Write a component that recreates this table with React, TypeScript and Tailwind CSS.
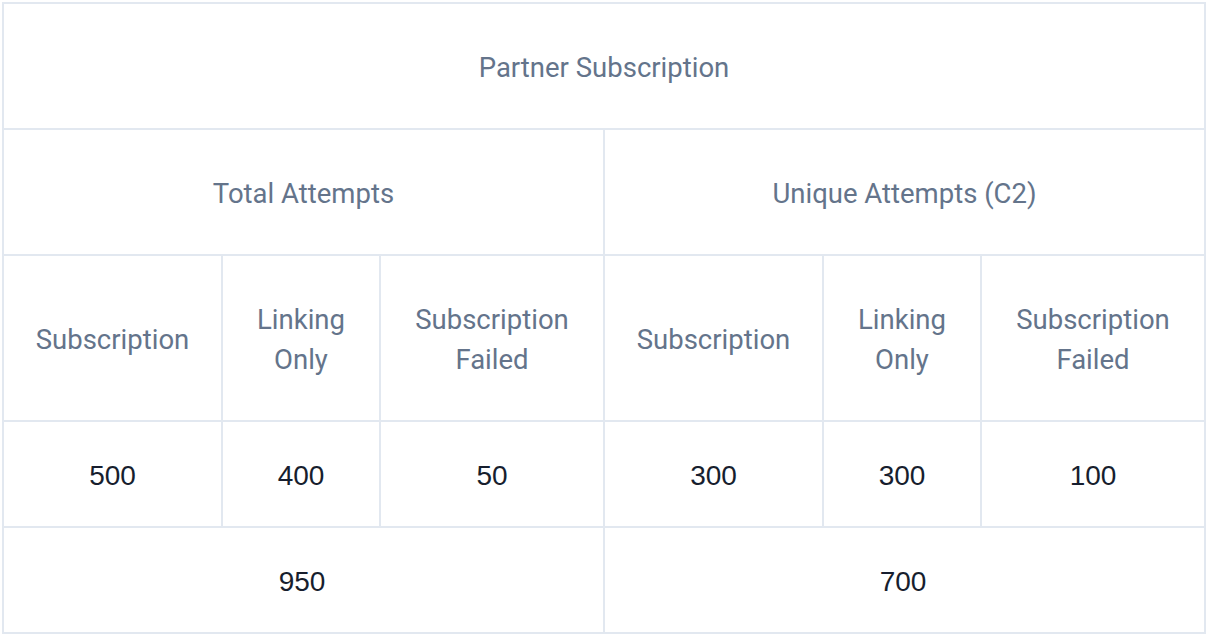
import React from "react";

const sub = ["Subscription", "Linking Only", "Subscription Failed"];

const values = ["500", "400", "50", "300", "300", "100"];

const head =
  "flex items-center justify-center text-center pt-[3px] border-r-2 border-b-2 border-[#e2e8f0] text-[27.5px] leading-[40px] text-[#64748b] font-['Roboto',sans-serif]";
const num =
  "flex items-center justify-center pt-[3px] border-b-2 border-[#e2e8f0] text-[28px] text-[#171e2e] font-['Liberation_Sans',Arial,sans-serif]";

export default function App() {
  return (
    <div className="w-[1210px] h-[634px] bg-white pl-[2px] pt-[2px]">
      <div className="grid w-[1204px] grid-cols-[219px_158px_224px_219px_158px_224px] grid-rows-[126px_126px_166px_106px_106px] border-l-2 border-t-2 border-[#e2e8f0]">
        {/* top title */}
        <div className={`${head} col-span-6`}>Partner Subscription</div>

        {/* group headers */}
        <div className={`${head} col-span-3`}>Total Attempts</div>
        <div className={`${head} col-span-3`}>Unique Attempts (C2)</div>

        {/* sub headers */}
        {[...sub, ...sub].map((s, i) => (
          <div key={i} className={head}>
            {s === "Subscription" ? (
              s
            ) : (
              <span>
                {s.split(" ")[0]}
                <br />
                {s.split(" ")[1]}
              </span>
            )}
          </div>
        ))}

        {/* values */}
        {values.map((v, i) => (
          <div key={i} className={`${num} border-r-2`}>
            {v}
          </div>
        ))}

        {/* totals sit under the middle column of each group */}
        <div className={num}></div>
        <div className={num}>950</div>
        <div className={`${num} border-r-2`}></div>
        <div className={num}></div>
        <div className={num}>700</div>
        <div className={`${num} border-r-2`}></div>
      </div>
    </div>
  );
}
